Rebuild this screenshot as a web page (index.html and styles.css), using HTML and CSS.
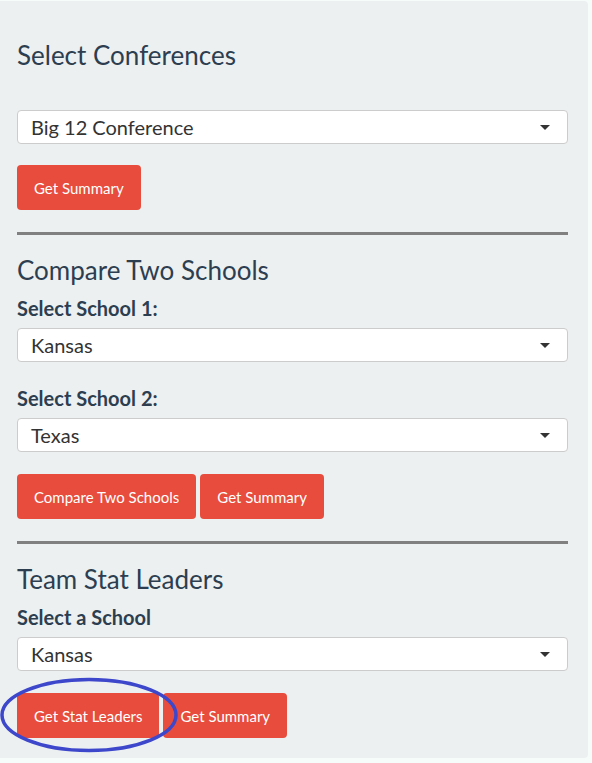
FILE: index.html
```html
<!DOCTYPE html>
<html>
<head>
<meta charset="utf-8">
<link rel="stylesheet" href="styles.css">
</head>
<body>
<div class="well">
  <section class="sec sec-first">
    <h3 class="title">Select Conferences</h3>
    <div class="select sel-conf"><span class="val">Big 12 Conference</span><span class="caret"></span></div>
    <div class="btns btns-first"><button class="btn">Get Summary</button></div>
  </section>
  <hr class="rule">
  <section class="sec">
    <h3 class="title">Compare Two Schools</h3>
    <label class="lbl">Select School 1:</label>
    <div class="select"><span class="val">Kansas</span><span class="caret"></span></div>
    <label class="lbl lbl-gap">Select School 2:</label>
    <div class="select"><span class="val">Texas</span><span class="caret"></span></div>
    <div class="btns"><button class="btn">Compare Two Schools</button><button class="btn">Get Summary</button></div>
  </section>
  <hr class="rule">
  <section class="sec">
    <h3 class="title">Team Stat Leaders</h3>
    <label class="lbl">Select a School</label>
    <div class="select"><span class="val">Kansas</span><span class="caret"></span></div>
    <div class="btns btns-last">
      <button class="btn">Get Stat Leaders</button><button class="btn">Get Summary</button>
      <svg class="circle" width="182" height="80" viewBox="0 0 182 80"><ellipse cx="89" cy="38" rx="87" ry="35.5" fill="none" stroke="#3d47cb" stroke-width="3.5"/></svg>
    </div>
  </section>
</div>
</body>
</html>
```
FILE: styles.css
```css
html, body { margin: 0; padding: 0; }
body {
  background: #f5fcf9;
  font-family: Lato, "Open Sans", sans-serif;
  color: #2c3e50;
  padding-top: 1px;
}
.well {
  width: 588px;
  height: 757px;
  box-sizing: border-box;
  background: #ecf0f1;
  border-radius: 0 4px 4px 0;
  padding: 0 20px 0 17px;
  display: flex;
  flex-direction: column;
}
.sec { display: flex; flex-direction: column; align-items: stretch; }
.sec-first { padding-top: 40px; }
.title {
  margin: 0 0 10px;
  font-size: 26px;
  font-weight: 400;
  line-height: 29px;
  color: #2c3e50;
}
.sel-conf { margin-top: 30px; }
.lbl {
  font-size: 20px;
  font-weight: 700;
  line-height: 26px;
  margin-bottom: 7px;
}
.lbl-gap { margin-top: 23px; }
.select {
  height: 34px;
  box-sizing: border-box;
  background: #fff;
  border: 1px solid #cccccc;
  border-radius: 4px;
  display: flex;
  align-items: center;
  justify-content: space-between;
  padding: 0 17px 0 13px;
  font-size: 20px;
  color: #333;
}
.val { line-height: 32px; }
.caret {
  width: 0; height: 0;
  border-left: 5px solid transparent;
  border-right: 5px solid transparent;
  border-top: 5px solid #333;
}
.btns {
  display: flex;
  gap: 4px;
  margin-top: 22px;
  position: relative;
}
.btns-first { margin-top: 21px; }
.btn {
  height: 45px;
  box-sizing: border-box;
  border: none;
  border-radius: 4px;
  background: #e74c3c;
  color: #fff;
  font-family: Lato, "Open Sans", sans-serif;
  font-size: 15px;
  padding: 0 17px;
  margin: 0;
}
.rule {
  border: none;
  border-top: 3px solid #808080;
  margin: 22px 0 21px;
  height: 0;
}
.circle {
  position: absolute;
  left: -17px;
  top: -16px;
  pointer-events: none;
}
```
